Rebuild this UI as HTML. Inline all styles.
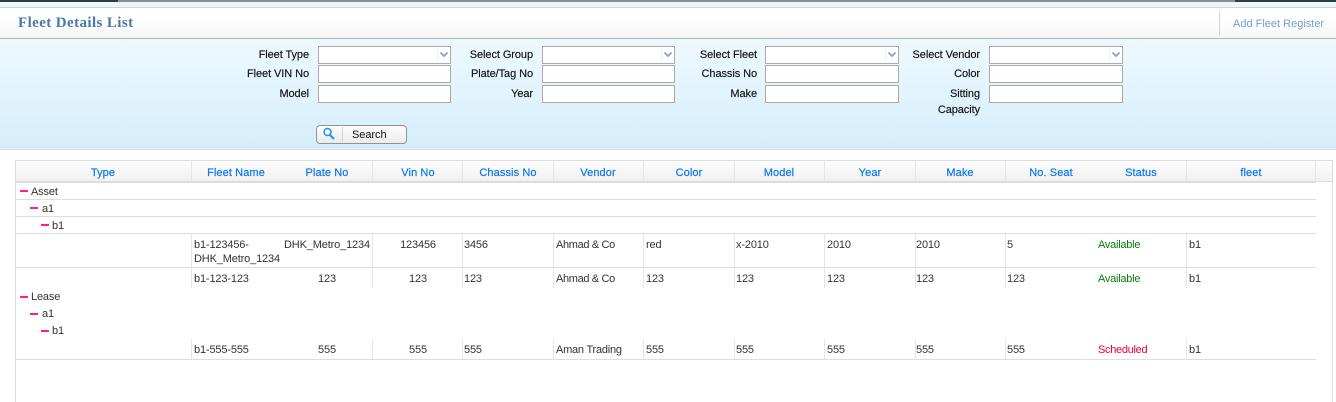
<!DOCTYPE html>
<html>
<head>
<meta charset="utf-8">
<style>
html,body{margin:0;padding:0;width:1336px;height:402px;overflow:hidden;background:#fff}
body{position:relative;font-family:"Liberation Sans",sans-serif;font-size:11px;color:#333}
div,span{position:absolute;box-sizing:border-box}
.t{white-space:nowrap;line-height:14px;letter-spacing:-.15px;margin-top:1px}
.l{color:#111;text-align:right;width:120px;white-space:nowrap;line-height:14px;letter-spacing:-.08px;margin-top:1px;-webkit-text-stroke:.15px #111}
.i{background:#fff;border:1px solid #aaa;width:134px;height:18px}
.n{width:133px}
.a{right:0;top:1px;width:13px;height:14px;border-left:1px solid #eee;border-radius:3px}
.h{color:#0a78ee;text-align:center;width:110px;white-space:nowrap;line-height:14px;top:166px;letter-spacing:.1px;-webkit-text-stroke:.2px #0a78ee}
.v{background:#e6e6e6;width:1px}
.hl{background:#dedede;height:1px;left:16px;width:1300px}
.m{background:#ff1a96;height:2px;width:8px}
.c{width:110px;text-align:center}
</style>
</head>
<body>
<!-- top strip -->
<div style="left:0;top:0;width:1336px;height:2px;background:#8a8f92"></div>
<div style="left:0;top:0;width:118px;height:2px;background:#2c3c48"></div>
<div style="left:1235px;top:0;width:101px;height:2px;background:#2c3c48"></div>
<div style="left:0;top:2px;width:1336px;height:5px;background:#edf6f9"></div>
<div style="left:0;top:7px;width:1336px;height:1px;background:#cdd5d8"></div>
<!-- title bar -->
<div style="left:0;top:8px;width:1336px;height:30px;background:linear-gradient(#fff,#fff 40%,#f6f6f6)"></div>
<div style="left:0;top:38px;width:1336px;height:1px;background:#b5b8ba"></div>
<div class="t" style="left:18px;top:13px;font-family:'Liberation Serif',serif;font-weight:bold;font-size:15px;line-height:18px;color:#4a7aa6;letter-spacing:.4px">Fleet Details List</div>
<div style="left:1219px;top:11px;width:4px;height:25px;border-left:1px solid #d6d6d6;border-radius:3px"></div>
<div class="t" style="left:1233px;top:16px;color:#6fa3cc;letter-spacing:0">Add Fleet Register</div>
<!-- filter panel -->
<div style="left:0;top:39px;width:1336px;height:110px;background:linear-gradient(#eef9fe,#d5eefb)"></div>
<div style="left:0;top:149px;width:1336px;height:1px;background:#e2e2e2"></div>

<div class="l" style="left:189px;top:47px">Fleet Type</div>
<div class="l" style="left:189px;top:66px">Fleet VIN No</div>
<div class="l" style="left:189px;top:86px">Model</div>
<div class="l" style="left:413px;top:47px">Select Group</div>
<div class="l" style="left:413px;top:66px">Plate/Tag No</div>
<div class="l" style="left:413px;top:86px">Year</div>
<div class="l" style="left:637px;top:47px">Select Fleet</div>
<div class="l" style="left:637px;top:66px">Chassis No</div>
<div class="l" style="left:637px;top:86px">Make</div>
<div class="l" style="left:860px;top:47px">Select Vendor</div>
<div class="l" style="left:860px;top:66px">Color</div>
<div class="l" style="left:860px;top:86px">Sitting</div>
<div class="l" style="left:860px;top:102px">Capacity</div>

<div class="i n" style="left:318px;top:46px"><div class="a"><svg width="12" height="14" style="position:absolute;left:0;top:0"><path d="M2.500 4.500l3.500 3.500 3.500-3.500" fill="none" stroke="#7ba6d0" stroke-width="1.800"/></svg></div></div>
<div class="i n" style="left:318px;top:65px"></div>
<div class="i n" style="left:318px;top:85px"></div>
<div class="i n" style="left:542px;top:46px"><div class="a"><svg width="12" height="14" style="position:absolute;left:0;top:0"><path d="M2.500 4.500l3.500 3.500 3.500-3.500" fill="none" stroke="#7ba6d0" stroke-width="1.800"/></svg></div></div>
<div class="i n" style="left:542px;top:65px"></div>
<div class="i n" style="left:542px;top:85px"></div>
<div class="i" style="left:765px;top:46px"><div class="a"><svg width="12" height="14" style="position:absolute;left:0;top:0"><path d="M2.500 4.500l3.500 3.500 3.500-3.500" fill="none" stroke="#7ba6d0" stroke-width="1.800"/></svg></div></div>
<div class="i" style="left:765px;top:65px"></div>
<div class="i" style="left:765px;top:85px"></div>
<div class="i" style="left:989px;top:46px"><div class="a"><svg width="12" height="14" style="position:absolute;left:0;top:0"><path d="M2.500 4.500l3.500 3.500 3.500-3.500" fill="none" stroke="#7ba6d0" stroke-width="1.800"/></svg></div></div>
<div class="i" style="left:989px;top:65px"></div>
<div class="i" style="left:989px;top:85px"></div>

<!-- search button -->
<div style="left:316px;top:125px;width:91px;height:19px;border:1px solid #8d9499;border-radius:4px;background:linear-gradient(#fdfdfd,#ececec)"></div>
<div style="left:342px;top:127px;width:1px;height:15px;background:#d4d4d4"></div>
<svg width="14" height="14" style="position:absolute;left:322px;top:127px"><circle cx="5.500" cy="5" r="3.500" fill="none" stroke="#1e90ff" stroke-width="1.500"/><path d="M8 8l4 4" stroke="#1e90ff" stroke-width="2"/></svg>
<div class="t" style="left:352px;top:127px;color:#111;letter-spacing:-.05px">Search</div>

<!-- grid frame -->
<div style="left:15px;top:160px;width:1318px;height:1px;background:#dedede"></div>
<div style="left:15px;top:160px;width:1px;height:242px;background:#dedede"></div>
<div style="left:1332px;top:160px;width:1px;height:242px;background:#dedede"></div>
<div style="left:16px;top:161px;width:1316px;height:20px;background:linear-gradient(#fdfdfd,#f1f1f1)"></div>
<div style="left:1316px;top:181px;width:16px;height:1px;background:#dedede"></div>
<div style="left:16px;top:181px;width:1300px;height:2px;background:#dcdcdc"></div>

<!-- header dividers -->
<div class="v" style="left:191px;top:161px;height:20px"></div>
<div class="v" style="left:372px;top:161px;height:20px"></div>
<div class="v" style="left:462px;top:161px;height:20px"></div>
<div class="v" style="left:553px;top:161px;height:20px"></div>
<div class="v" style="left:643px;top:161px;height:20px"></div>
<div class="v" style="left:734px;top:161px;height:20px"></div>
<div class="v" style="left:824px;top:161px;height:20px"></div>
<div class="v" style="left:915px;top:161px;height:20px"></div>
<div class="v" style="left:1005px;top:161px;height:20px"></div>
<div class="v" style="left:1186px;top:161px;height:20px"></div>
<div class="v" style="left:1315px;top:161px;height:20px"></div>

<!-- header text -->
<div class="h" style="left:48px">Type</div>
<div class="h" style="left:181px">Fleet Name</div>
<div class="h" style="left:272px">Plate No</div>
<div class="h" style="left:363px">Vin No</div>
<div class="h" style="left:453px">Chassis No</div>
<div class="h" style="left:543px">Vendor</div>
<div class="h" style="left:634px">Color</div>
<div class="h" style="left:724px">Model</div>
<div class="h" style="left:815px">Year</div>
<div class="h" style="left:905px">Make</div>
<div class="h" style="left:996px">No. Seat</div>
<div class="h" style="left:1086px">Status</div>
<div class="h" style="left:1196px">fleet</div>

<!-- row lines -->
<div class="hl" style="top:199px"></div>
<div class="hl" style="top:216px"></div>
<div class="hl" style="top:233px"></div>
<div class="hl" style="top:267px"></div>
<div class="hl" style="top:359px"></div>

<!-- cell dividers -->
<div class="v" style="left:191px;top:234px;height:54px"></div>
<div class="v" style="left:372px;top:234px;height:54px"></div>
<div class="v" style="left:462px;top:234px;height:54px"></div>
<div class="v" style="left:553px;top:234px;height:54px"></div>
<div class="v" style="left:643px;top:234px;height:54px"></div>
<div class="v" style="left:734px;top:234px;height:54px"></div>
<div class="v" style="left:824px;top:234px;height:54px"></div>
<div class="v" style="left:915px;top:234px;height:54px"></div>
<div class="v" style="left:1005px;top:234px;height:54px"></div>
<div class="v" style="left:1186px;top:234px;height:54px"></div>
<div class="v" style="left:191px;top:339px;height:20px"></div>
<div class="v" style="left:372px;top:339px;height:20px"></div>
<div class="v" style="left:462px;top:339px;height:20px"></div>
<div class="v" style="left:553px;top:339px;height:20px"></div>
<div class="v" style="left:643px;top:339px;height:20px"></div>
<div class="v" style="left:734px;top:339px;height:20px"></div>
<div class="v" style="left:824px;top:339px;height:20px"></div>
<div class="v" style="left:915px;top:339px;height:20px"></div>
<div class="v" style="left:1005px;top:339px;height:20px"></div>
<div class="v" style="left:1186px;top:339px;height:20px"></div>

<!-- tree -->
<div class="m" style="left:20px;top:190px"></div><div class="t" style="left:31px;top:184px">Asset</div>
<div class="m" style="left:30px;top:207px"></div><div class="t" style="left:42px;top:201px">a1</div>
<div class="m" style="left:41px;top:224px"></div><div class="t" style="left:52px;top:218px">b1</div>
<div class="m" style="left:20px;top:296px"></div><div class="t" style="left:31px;top:289px">Lease</div>
<div class="m" style="left:30px;top:313px"></div><div class="t" style="left:42px;top:306px">a1</div>
<div class="m" style="left:41px;top:330px"></div><div class="t" style="left:52px;top:323px">b1</div>

<!-- row 1 -->
<div class="t" style="left:194px;top:237px">b1-123456-</div>
<div class="t" style="left:194px;top:251px">DHK_Metro_1234</div>
<div class="t" style="left:284px;top:237px">DHK_Metro_1234</div>
<div class="t c" style="left:363px;top:237px">123456</div>
<div class="t" style="left:464px;top:237px">3456</div>
<div class="t" style="left:556px;top:237px;letter-spacing:-.35px">Ahmad &amp; Co</div>
<div class="t" style="left:646px;top:237px">red</div>
<div class="t" style="left:736px;top:237px">x-2010</div>
<div class="t" style="left:827px;top:237px">2010</div>
<div class="t" style="left:916px;top:237px">2010</div>
<div class="t" style="left:1007px;top:237px">5</div>
<div class="t" style="left:1098px;top:237px;color:#0a7d0a;letter-spacing:-.25px">Available</div>
<div class="t" style="left:1189px;top:237px">b1</div>
<!-- row 2 -->
<div class="t" style="left:194px;top:271px">b1-123-123</div>
<div class="t c" style="left:272px;top:271px">123</div>
<div class="t c" style="left:363px;top:271px">123</div>
<div class="t" style="left:464px;top:271px">123</div>
<div class="t" style="left:556px;top:271px;letter-spacing:-.35px">Ahmad &amp; Co</div>
<div class="t" style="left:646px;top:271px">123</div>
<div class="t" style="left:736px;top:271px">123</div>
<div class="t" style="left:827px;top:271px">123</div>
<div class="t" style="left:916px;top:271px">123</div>
<div class="t" style="left:1007px;top:271px">123</div>
<div class="t" style="left:1098px;top:271px;color:#0a7d0a;letter-spacing:-.25px">Available</div>
<div class="t" style="left:1189px;top:271px">b1</div>
<!-- row 3 -->
<div class="t" style="left:194px;top:342px">b1-555-555</div>
<div class="t c" style="left:272px;top:342px">555</div>
<div class="t c" style="left:363px;top:342px">555</div>
<div class="t" style="left:464px;top:342px">555</div>
<div class="t" style="left:556px;top:342px;letter-spacing:-.23px">Aman Trading</div>
<div class="t" style="left:646px;top:342px">555</div>
<div class="t" style="left:736px;top:342px">555</div>
<div class="t" style="left:827px;top:342px">555</div>
<div class="t" style="left:916px;top:342px">555</div>
<div class="t" style="left:1007px;top:342px">555</div>
<div class="t" style="left:1098px;top:342px;color:#e8003a;letter-spacing:-.3px">Scheduled</div>
<div class="t" style="left:1189px;top:342px">b1</div>
</body>
</html>
